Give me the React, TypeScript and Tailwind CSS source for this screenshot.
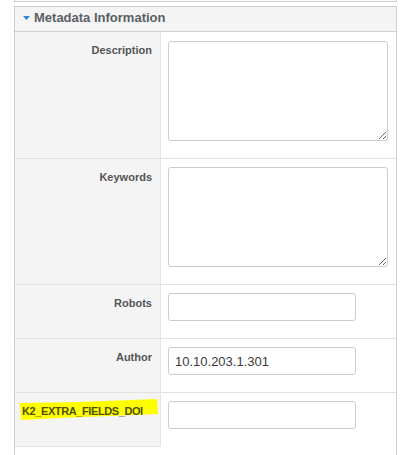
import React from "react";

const font = "font-['Liberation_Sans',Arial,Helvetica,sans-serif]";

interface RowProps {
	label: React.ReactNode;
	height: string;
	children: React.ReactNode;
	last?: boolean;
}

function Row({ label, height, children, last }: RowProps) {
	return (
		<div className={`flex ${height} ${last ? "" : "border-b border-[#e2e2e2]"}`}>
			<div
				className={`w-[146px] shrink-0 bg-[#f4f4f4] border-r border-[#e4e4e4] pt-[12px] pr-[8px] text-right text-[11px] leading-[13px] ${last ? "border-b" : ""}`}
			>
				{label}
			</div>
			<div className="flex-1 pl-[7px] pt-[8px]">{children}</div>
		</div>
	);
}

function Label({ children }: { children: React.ReactNode }) {
	return <span className="font-bold text-[#555]">{children}</span>;
}

function TextInput({ value = "" }: { value?: string }) {
	return (
		<input
			type="text"
			defaultValue={value}
			className="block w-[188px] h-[28px] border border-[#cccccc] rounded-[3px] px-[6px] text-[13px] text-[#3a3a3a] bg-white outline-none"
		/>
	);
}

function TextArea() {
	return (
		<textarea className="block w-[220px] h-[100px] border border-[#cccccc] rounded-[3px] bg-white outline-none" />
	);
}

export default function App() {
	return (
		<div className={`w-[411px] h-[455px] overflow-hidden bg-white ${font}`}>
			<div className="ml-[14px] w-[383px] h-[2px] border-x border-b border-[#cfcfcf]" />

			<div className="ml-[14px] mt-[4px] w-[383px] h-[460px] border-x border-t border-[#cfcfcf]">
				<div className="h-[25px] bg-[#f4f4f4] border-b border-[#cfcfcf] flex items-start pt-[3px] pl-[8px] gap-[4px]">
					<svg width="7" height="4" viewBox="0 0 7 4" className="mt-[6px]">
						<polygon points="0,0 7,0 3.5,4" fill="#2f86d6" />
					</svg>
					<span className="text-[13px] leading-[15px] font-bold text-[#5a5f66]">
						Metadata Information
					</span>
				</div>

				<Row label={<Label>Description</Label>} height="h-[127px]">
					<div className="pt-[1px]">
						<TextArea />
					</div>
				</Row>
				<Row label={<Label>Keywords</Label>} height="h-[126px]">
					<TextArea />
				</Row>
				<Row label={<Label>Robots</Label>} height="h-[54px]">
					<TextInput />
				</Row>
				<Row label={<Label>Author</Label>} height="h-[54px]">
					<TextInput value="10.10.203.1.301" />
				</Row>
				<Row
					last
					height="h-[54px]"
					label={
						<div className="relative text-left pl-[7px]">
							<svg
								width="140"
								height="24"
								viewBox="0 0 140 24"
								className="absolute left-[4px] top-[-7px]"
							>
								<polygon
									points="1,5 60,4 138,1 139,16 90,18 40,20 2,22"
									fill="#ffff00"
								/>
							</svg>
							<span className="relative font-bold text-[#4f4f08] tracking-[-0.4px]">
								K2_EXTRA_FIELDS_DOI
							</span>
						</div>
					}
				>
					<TextInput />
				</Row>
			</div>
		</div>
	);
}
